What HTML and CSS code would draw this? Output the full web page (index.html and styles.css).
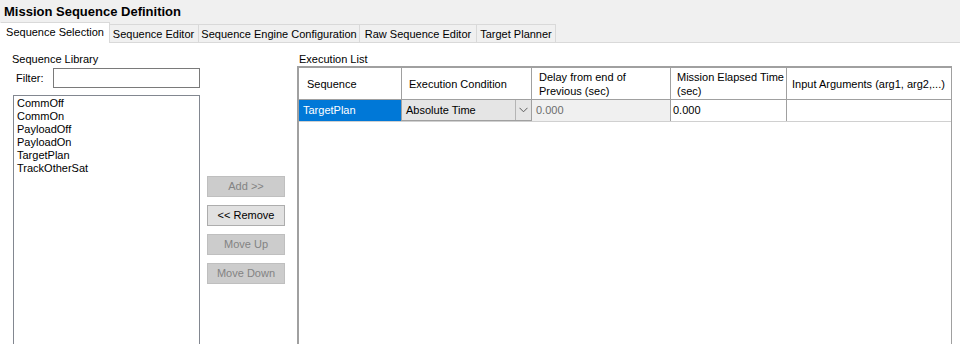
FILE: index.html
```html
<!DOCTYPE html>
<html>
<head>
<meta charset="utf-8">
<link rel="stylesheet" href="styles.css">
</head>
<body>
<div class="window">
  <div class="title">Mission Sequence Definition</div>
  <div class="tabs">
    <div class="tab tab-active tab-sel">Sequence Selection</div>
    <div class="tab tab-editor">Sequence Editor</div>
    <div class="tab tab-engine">Sequence Engine Configuration</div>
    <div class="tab tab-raw">Raw Sequence Editor</div>
    <div class="tab tab-target">Target Planner</div>
  </div>
  <div class="panel">
    <div class="library">
      <div class="label">Sequence Library</div>
      <div class="filter-row">
        <span class="filter-label">Filter:</span>
        <div class="textbox"></div>
      </div>
      <div class="listbox">
        <div class="item">CommOff</div>
        <div class="item">CommOn</div>
        <div class="item">PayloadOff</div>
        <div class="item">PayloadOn</div>
        <div class="item">TargetPlan</div>
        <div class="item">TrackOtherSat</div>
      </div>
    </div>
    <div class="buttons">
      <div class="btn btn-disabled">Add &gt;&gt;</div>
      <div class="btn">&lt;&lt; Remove</div>
      <div class="btn btn-disabled">Move Up</div>
      <div class="btn btn-disabled">Move Down</div>
    </div>
    <div class="exec">
      <div class="label exec-label">Execution List</div>
      <div class="grid">
        <div class="row header">
          <div class="cell c1 hc1">Sequence</div>
          <div class="cell c2">Execution Condition</div>
          <div class="cell c3 two">Delay from end of<br>Previous (sec)</div>
          <div class="cell c4 two">Mission Elapsed Time<br>(sec)</div>
          <div class="cell c5">Input Arguments (arg1, arg2,...)</div>
        </div>
        <div class="row data">
          <div class="cell c1 selected">TargetPlan</div>
          <div class="cell c2 combo-cell">
            <div class="combo">
              <span class="combo-text">Absolute Time</span>
              <span class="combo-btn">
                <svg width="9" height="6" viewBox="0 0 9 6"><path d="M0.5 0.8 L4.5 4.8 L8.5 0.8" fill="none" stroke="#5a5a5a" stroke-width="1"/></svg>
              </span>
            </div>
          </div>
          <div class="cell c3 readonly">0.000</div>
          <div class="cell c4 edit">0.000</div>
          <div class="cell c5"></div>
        </div>
      </div>
    </div>
  </div>
</div>
</body>
</html>
```
FILE: styles.css
```css
html, body {
  margin: 0;
  padding: 0;
}
body {
  width: 960px;
  height: 344px;
  overflow: hidden;
  background: #f0f0f0;
  font-family: "Liberation Sans", Arial, sans-serif;
  font-size: 11px;
  color: #000;
}
.window {
  display: flex;
  flex-direction: column;
  height: 344px;
}
.title {
  font-weight: bold;
  font-size: 13px;
  line-height: 15px;
  padding: 4px 0 0 4px;
  margin-bottom: 3px;
}
.tabs {
  display: flex;
  align-items: flex-end;
  height: 20px;
  position: relative;
  z-index: 2;
}
.tab {
  box-sizing: border-box;
  border: 1px solid #d9d9d9;
  border-bottom: none;
  background: #f0f0f0;
  line-height: 13px;
  padding: 3px 0 1px;
  text-align: center;
  white-space: nowrap;
  margin-left: -1px;
}
.tab-active {
  background: #fff;
  padding: 3px 0 4px;
  margin-bottom: -1px;
  margin-left: 0;
  position: relative;
  z-index: 3;
  border-left-color: #fff;
}
.tab-sel { width: 110px; }
.tab-editor { width: 90px; margin-left: -1px; border-left: none; }
.tab-engine { width: 162px; }
.tab-raw { width: 118px; }
.tab-target { width: 80px; }

.panel {
  flex: 1;
  display: flex;
  align-items: flex-start;
  background: #fff;
  border-top: 1px solid #d9d9d9;
  padding-top: 10px;
  min-height: 0;
}
.label {
  line-height: 13px;
  white-space: nowrap;
}
.library {
  margin-left: 12px;
  width: 188px;
  display: flex;
  flex-direction: column;
}
.filter-row {
  display: flex;
  align-items: center;
  margin-top: 2px;
  padding-left: 4px;
}
.filter-label {
  line-height: 13px;
}
.textbox {
  margin-left: auto;
  box-sizing: border-box;
  width: 147px;
  height: 20px;
  border: 1px solid #7a7a7a;
  background: #fff;
}
.listbox {
  margin-top: 7px;
  margin-left: 1px;
  box-sizing: border-box;
  width: 187px;
  height: 260px;
  border: 1px solid #828790;
  padding: 1px 0 0 3px;
}
.item {
  line-height: 13px;
}
.buttons {
  margin-left: 7px;
  margin-top: 123px;
  width: 78px;
  display: flex;
  flex-direction: column;
  gap: 8px;
}
.btn {
  box-sizing: border-box;
  height: 21px;
  line-height: 19px;
  text-align: center;
  border: 1px solid #adadad;
  background: #e1e1e1;
  color: #000;
}
.btn-disabled {
  background: #cccccc;
  border-color: #bfbfbf;
  color: #838383;
}
.exec {
  margin-left: 12px;
  width: 655px;
  display: flex;
  flex-direction: column;
}
.exec-label {
  padding-left: 2px;
}
.grid {
  box-sizing: border-box;
  height: 280px;
  border-top: 2px solid #a0a0a0;
  border-left: 2px solid #a0a0a0;
  border-right: 1px solid #a0a0a0;
  background: #fff;
}
.row {
  display: flex;
}
.header {
  height: 32px;
  box-sizing: border-box;
  border-bottom: 1px solid #a0a0a0;
}
.header .cell {
  display: flex;
  align-items: center;
  padding-left: 6px;
  line-height: 14px;
}
.header .hc1 { padding-left: 8px; }
.header .c2, .header .c3 { padding-left: 7px; }
.header .c5 { padding-left: 5px; }
.cell {
  box-sizing: border-box;
  border-right: 1px solid #a0a0a0;
  white-space: nowrap;
  overflow: hidden;
}
.c1 { width: 103px; }
.c2 { width: 130px; }
.c3 { width: 139px; }
.c4 { width: 116px; }
.c5 { width: 164px; border-right: none; }
.data {
  height: 22px;
  box-sizing: border-box;
  border-bottom: 1px solid #d0d0d0;
}
.data .cell {
  line-height: 21px;
  padding-left: 4px;
}
.data .selected {
  background: #0078d7;
  color: #fff;
}
.data .combo-cell {
  padding-left: 0;
}
.combo {
  display: flex;
  height: 21px;
  background: #e5e5e5;
  border-bottom: 1px solid #a0a0a0;
  box-sizing: border-box;
}
.combo-text {
  flex: 1;
  padding-left: 4px;
  line-height: 20px;
}
.combo-btn {
  width: 15px;
  border-left: 1px solid #b4b4b4;
  display: flex;
  align-items: center;
  justify-content: center;
}
.data .readonly {
  background: #f0f0f0;
  color: #6d6d6d;
}
.data .edit {
  padding-left: 2px;
}
```
